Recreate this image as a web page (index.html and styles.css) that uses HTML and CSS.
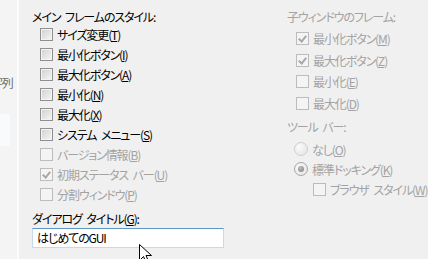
FILE: index.html
```html
<!DOCTYPE html>
<html lang="ja">
<head>
<meta charset="UTF-8">
<title>スタイル設定</title>
<link rel="stylesheet" href="styles.css">
</head>
<body>

<div class="window">
    <div class="side">
        <div class="side-label">文字列</div>
        <div class="side-mark"></div>
    </div>

    <div class="main">
        <div class="col left">
            <div class="heading">メイン フレームのスタイル:</div>
            <label class="row"><span class="box"></span>サイズ変更(<u>T</u>)</label>
            <label class="row"><span class="box"></span>最小化ボタン(<u>I</u>)</label>
            <label class="row"><span class="box"></span>最大化ボタン(<u>A</u>)</label>
            <label class="row"><span class="box"></span>最小化(<u>N</u>)</label>
            <label class="row"><span class="box"></span>最大化(<u>X</u>)</label>
            <label class="row"><span class="box"></span>システム メニュー(<u>S</u>)</label>
            <label class="row off"><span class="box"></span>バージョン情報(<u>B</u>)</label>
            <label class="row off"><span class="box checked"></span>初期ステータス バー(<u>U</u>)</label>
            <label class="row off"><span class="box"></span>分割ウィンドウ(<u>P</u>)</label>

            <div class="title-label">ダイアログ タイトル(<u>G</u>):</div>
            <div class="textbox">はじめてのGUI</div>
        </div>

        <div class="col right">
            <div class="heading off">子ウィンドウのフレーム:</div>
            <label class="row tall off"><span class="box checked"></span>最小化ボタン(<u>M</u>)</label>
            <label class="row tall off"><span class="box checked"></span>最大化ボタン(<u>Z</u>)</label>
            <label class="row tall off"><span class="box"></span>最小化(<u>E</u>)</label>
            <label class="row tall off"><span class="box"></span>最大化(<u>D</u>)</label>

            <div class="heading off toolbar">ツール バー:</div>
            <label class="row off"><span class="radio"></span>なし(<u>O</u>)</label>
            <label class="row off"><span class="radio on"></span>標準ドッキング(<u>K</u>)</label>
            <label class="row off sub"><span class="box"></span>ブラウザ スタイル(<u>W</u>)</label>
        </div>
    </div>

    <svg class="cursor" width="14" height="22" viewBox="0 0 14 22">
        <path d="M0.5 0.5 L0.5 16.5 L4.5 12.5 L7.5 19.5 L10 18.5 L7 11.5 L12.5 11.5 Z" fill="#fff" stroke="#000" stroke-width="1"/>
    </svg>
</div>

</body>
</html>
```

FILE: styles.css
```css
body {
    margin: 0;
    padding: 0;
    background-color: #f0f0f0;
    font-family: "Noto Sans CJK JP", "Noto Sans", sans-serif;
    font-size: 12px;
    letter-spacing: -1.1px;
    word-spacing: 3px;
    font-feature-settings: "palt";
    color: #000;
    overflow: hidden;
}
u {
    text-decoration-thickness: 1px;
    text-underline-offset: 1px;
}
.window {
    position: relative;
    display: flex;
    height: 259px;
}
.side {
    width: 17px;
    flex-shrink: 0;
    background-color: #f4f4f4;
    border-right: 2px solid #fbfbfb;
    overflow: hidden;
}
.side-label {
    margin-top: 76px;
    margin-left: -20px;
    white-space: nowrap;
    color: #6d6d6d;
    line-height: 14px;
}
.side-mark {
    margin-top: 24px;
    width: 10px;
    height: 32px;
    background-color: #f9fafb;
}
.main {
    display: flex;
    padding: 10px 0 0 13px;
}
.col {
    display: flex;
    flex-direction: column;
}
.left {
    width: 255px;
}
.heading {
    line-height: 14px;
}
.row {
    display: flex;
    align-items: center;
    height: 20px;
    padding-left: 8px;
    white-space: nowrap;
}
.row.tall {
    height: 21.5px;
    padding-left: 9px;
}
.right .heading + .row {
    margin-top: 4px;
}
.off {
    color: #a3a3a3;
}
.box {
    width: 11px;
    height: 11px;
    margin-right: 4px;
    border: 1px solid #8e8f8f;
    background: linear-gradient(135deg, #d0d0d0, #f6f6f6);
    box-shadow: inset 0 0 0 1px #f4f4f4;
    position: relative;
}
.off .box {
    border-color: #bcbcbc;
    background: #f4f4f4;
    box-shadow: none;
}
.box.checked::after {
    content: "";
    position: absolute;
    left: 3px;
    top: 1px;
    width: 3px;
    height: 6px;
    border: solid #a8a8a8;
    border-width: 0 2px 2px 0;
    transform: rotate(40deg);
}
.radio {
    width: 12px;
    height: 12px;
    margin-left: -1px;
    margin-right: 4px;
    border-radius: 50%;
    border: 1px solid #cfcfcf;
    background: radial-gradient(circle at 35% 35%, #fafafa, #e2e2e2);
    position: relative;
}
.radio.on {
    border-color: #a6a6a6;
}
.radio.on::after {
    content: "";
    position: absolute;
    left: 3px;
    top: 3px;
    width: 6px;
    height: 6px;
    border-radius: 50%;
    background: radial-gradient(circle at 40% 35%, #bdbdbd, #7d7d7d);
}
.toolbar {
    margin-top: 5px;
    line-height: 16px;
}
.row.sub {
    padding-left: 26px;
}
.title-label {
    margin-top: 7px;
    line-height: 16px;
}
.textbox {
    margin-top: 1px;
    width: 186px;
    height: 18px;
    line-height: 18px;
    padding-left: 4px;
    background-color: #fff;
    border: 1px solid #c5daed;
    border-top-color: #5d97c4;
}
.cursor {
    position: absolute;
    left: 139px;
    top: 244px;
}
```
